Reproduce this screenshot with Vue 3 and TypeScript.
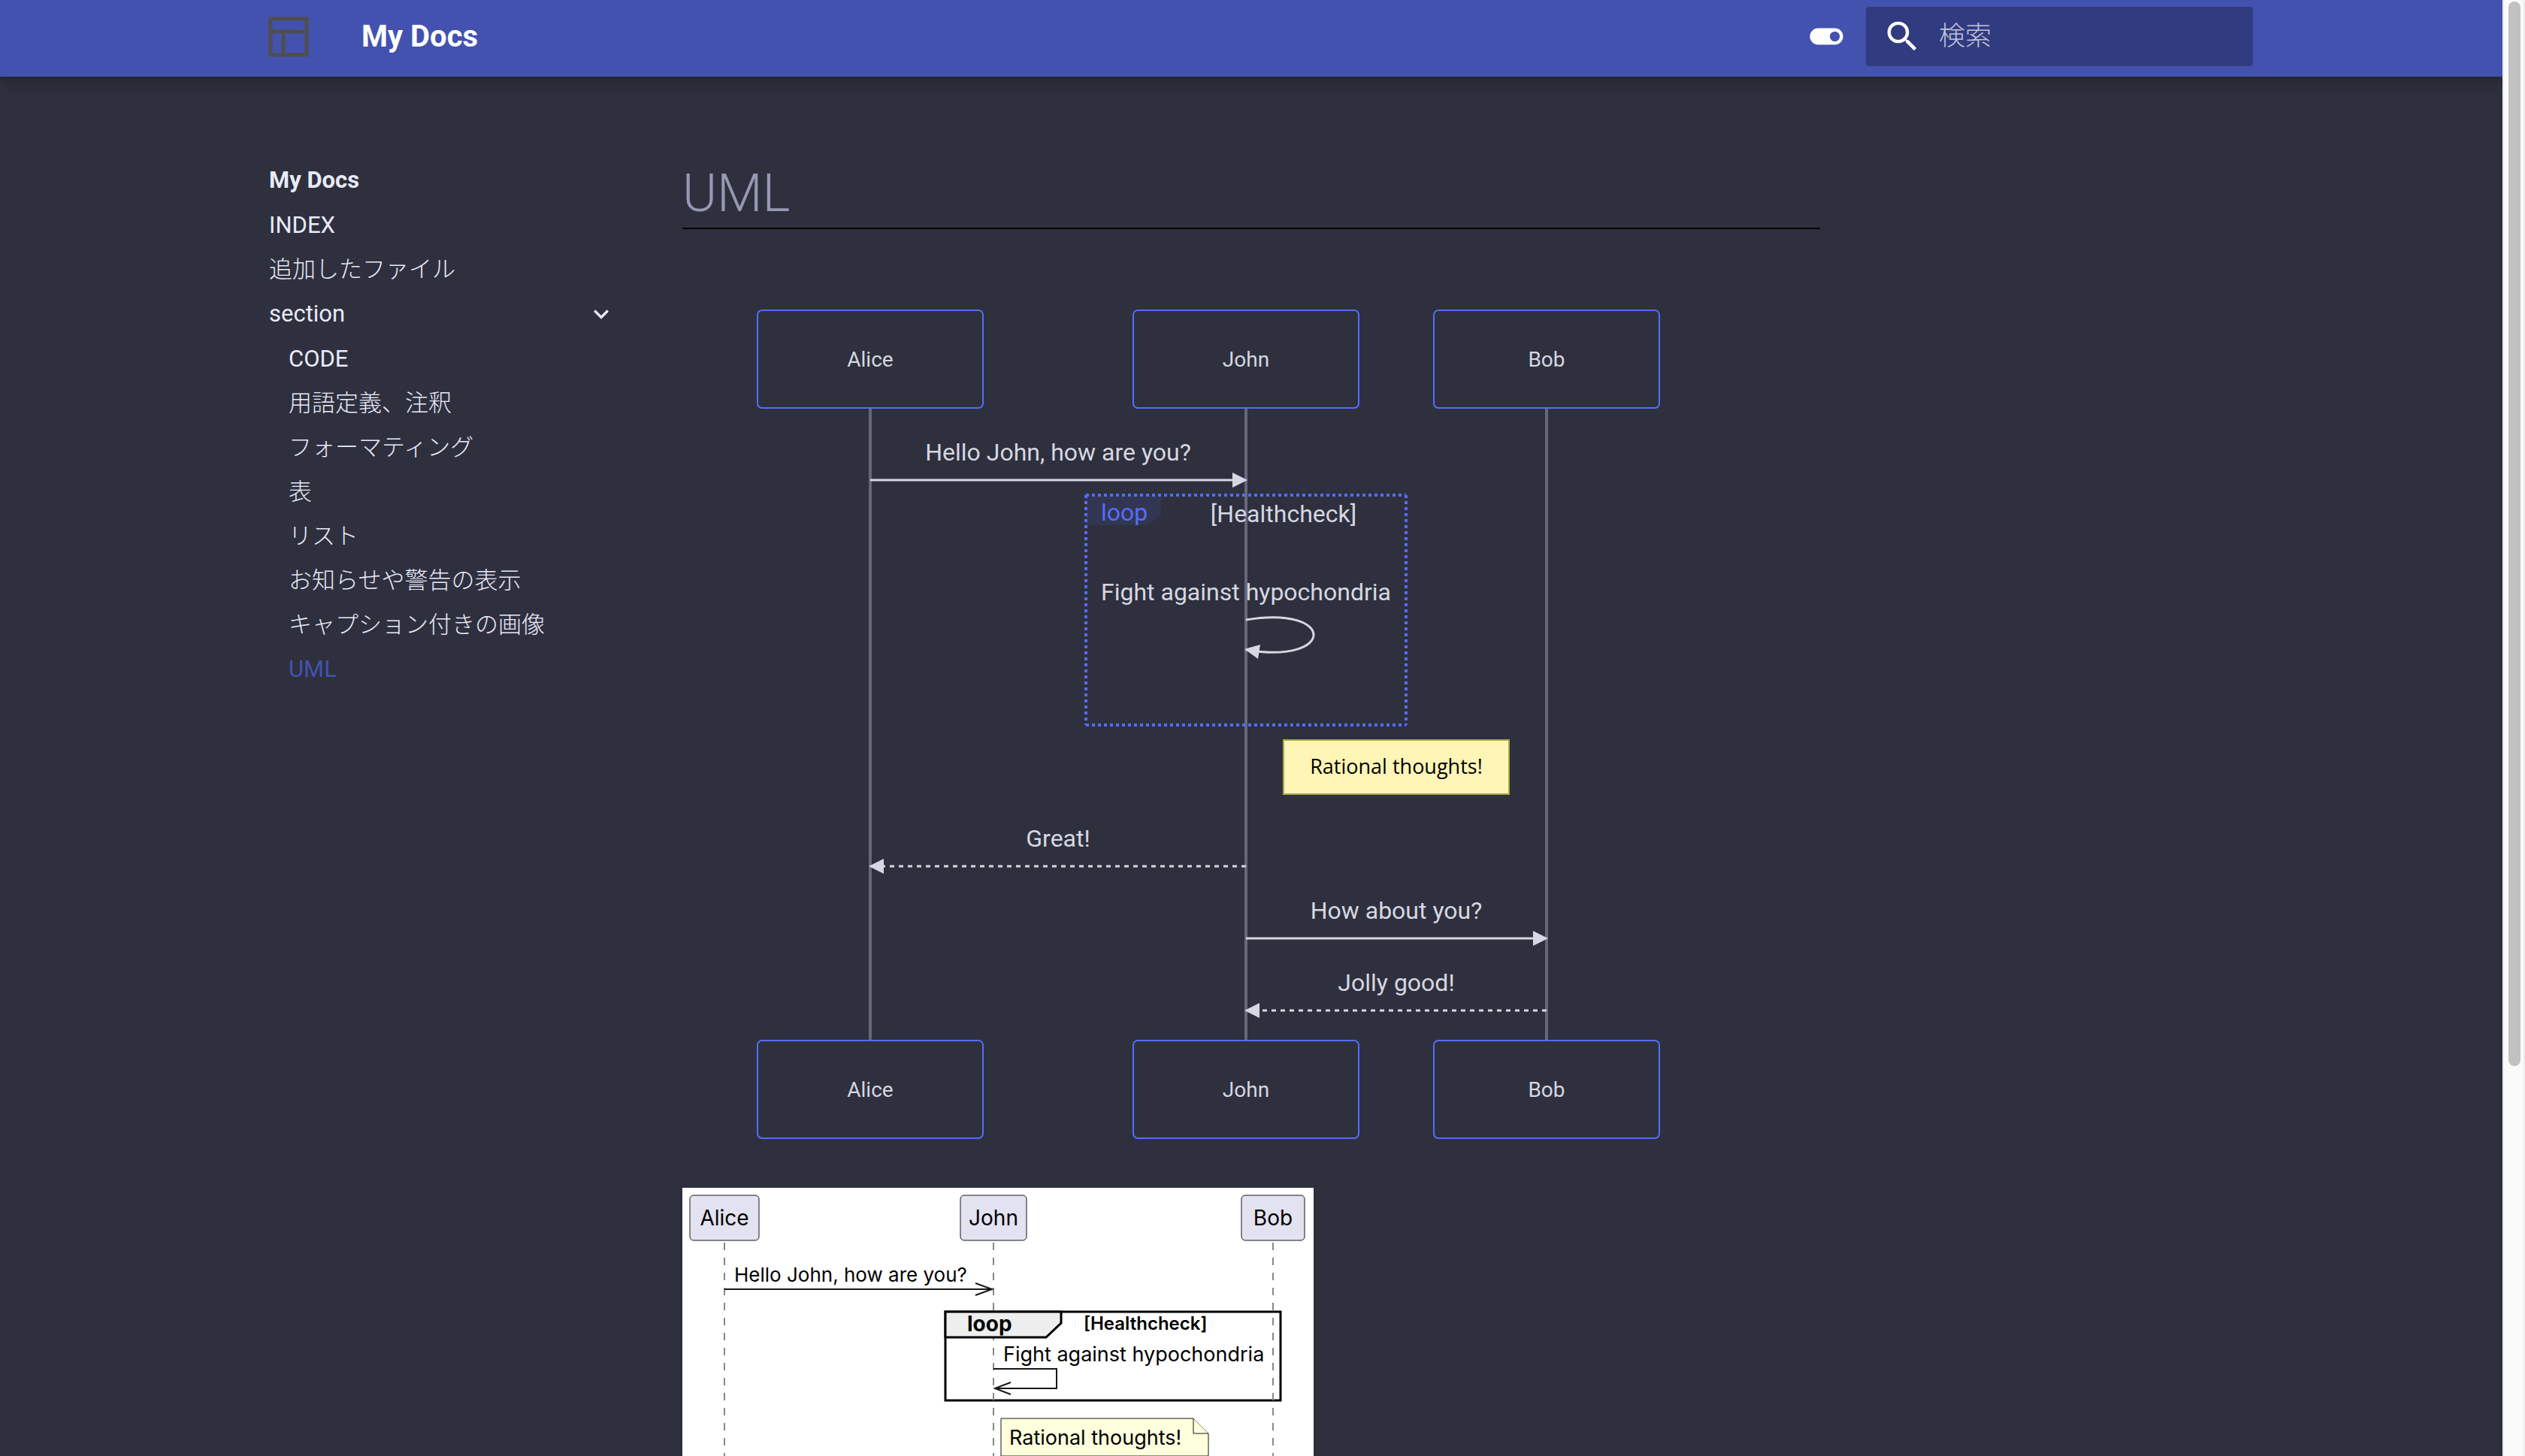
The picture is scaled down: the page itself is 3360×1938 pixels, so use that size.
<script setup lang="ts">
interface NavItem {
  label: string
  japanese?: boolean
  active?: boolean
}

interface Message {
  label: string
  from: number
  to: number
  y: number
  dashed: boolean
}

const topItems: NavItem[] = [{ label: 'INDEX' }, { label: '追加したファイル', japanese: true }]

const sectionItems: NavItem[] = [
  { label: 'CODE' },
  { label: '用語定義、注釈', japanese: true },
  { label: 'フォーマティング', japanese: true },
  { label: '表', japanese: true },
  { label: 'リスト', japanese: true },
  { label: 'お知らせや警告の表示', japanese: true },
  { label: 'キャプション付きの画像', japanese: true },
  { label: 'UML', active: true },
]

const actors = [
  { name: 'Alice', x: 250 },
  { name: 'John', x: 750 },
  { name: 'Bob', x: 1150 },
]
const actorRows = [1, 973]

const messages: Message[] = [
  { label: 'Hello John, how are you?', from: 250, to: 750, y: 227, dashed: false },
  { label: 'Great!', from: 750, to: 250, y: 741, dashed: true },
  { label: 'How about you?', from: 750, to: 1150, y: 837, dashed: false },
  { label: 'Jolly good!', from: 1150, to: 750, y: 933, dashed: true },
]

// The head overshoots the lifeline by two units and is twenty units long.
function arrowHead(m: Message): string {
  const dir = m.to > m.from ? 1 : -1
  const tip = m.to + 2 * dir
  const back = tip - 20 * dir
  return `${back},${m.y - 10} ${tip},${m.y} ${back},${m.y + 10}`
}

function shaftEnd(m: Message): number {
  return m.to > m.from ? m.to - 10 : m.to + 10
}

const umlActors = [
  { name: 'Alice', x: 10, width: 92, line: 56 },
  { name: 'John', x: 370, width: 88, line: 414 },
  { name: 'Bob', x: 744, width: 84, line: 786 },
]
</script>

<template>
  <div class="window">
    <div class="page">
      <header class="header">
        <div class="header-inner">
          <a class="logo" href="#" aria-label="My Docs">
            <svg viewBox="0 0 54 54" width="54" height="54" aria-hidden="true">
              <path d="M3 3h48v48H3zM3 20h48M20 20v31" fill="none" stroke="#4e4e4e" stroke-width="5" />
            </svg>
          </a>
          <span class="site-title">My Docs</span>
          <button class="palette" type="button" aria-label="ダークモード">
            <svg viewBox="0 0 24 24" width="53" height="53" aria-hidden="true">
              <path fill="#fff" d="M17 7H7a5 5 0 0 0-5 5 5 5 0 0 0 5 5h10a5 5 0 0 0 5-5 5 5 0 0 0-5-5m0 8a3 3 0 0 1-3-3 3 3 0 0 1 3-3 3 3 0 0 1 3 3 3 3 0 0 1-3 3" />
            </svg>
          </button>
          <form class="search" role="search" @submit.prevent>
            <label class="search-icon" for="query" aria-label="検索">
              <svg viewBox="0 0 24 24" width="53" height="53" aria-hidden="true">
                <path fill="#fff" d="M9.5 3A6.5 6.5 0 0 1 16 9.5c0 1.61-.59 3.09-1.56 4.23l.27.27h.79l5 5-1.5 1.5-5-5v-.79l-.27-.27A6.516 6.516 0 0 1 9.5 16 6.5 6.5 0 0 1 3 9.5 6.5 6.5 0 0 1 9.5 3m0 2C7 5 5 7 5 9.5S7 14 9.5 14 14 12 14 9.5 12 5 9.5 5" />
              </svg>
            </label>
            <input id="query" class="search-input" type="text" placeholder="検索" />
          </form>
        </div>
      </header>

      <div class="body">
        <nav class="sidebar" aria-label="My Docs">
          <a class="nav-title" href="#">My Docs</a>
          <ul class="nav-list">
            <li v-for="item in topItems" :key="item.label">
              <a class="nav-link" :class="{ japanese: item.japanese }" href="#">{{ item.label }}</a>
            </li>
            <li>
              <button class="nav-section" type="button" aria-expanded="true">
                <span>section</span>
                <svg viewBox="0 0 24 24" width="40" height="40" aria-hidden="true">
                  <path fill="currentColor" d="M7.41 8.58 12 13.17l4.59-4.59L18 10l-6 6-6-6z" />
                </svg>
              </button>
              <ul class="nav-list nested">
                <li v-for="item in sectionItems" :key="item.label">
                  <a
                    class="nav-link"
                    :class="{ active: item.active, japanese: item.japanese }"
                    href="#"
                  >{{ item.label }}</a>
                </li>
              </ul>
            </li>
          </ul>
        </nav>

        <main class="content">
          <h1 class="heading">UML</h1>

          <svg class="mermaid" viewBox="0 0 1400 1104" width="1400" height="1104" role="img" aria-label="Sequence diagram">
            <g v-for="a in actors" :key="a.name">
              <line class="lifeline" :x1="a.x" :x2="a.x" y1="131" y2="973" />
              <template v-for="y in actorRows" :key="y">
                <rect class="actor" :x="a.x - 150" :y="y" width="300" height="130" rx="6" />
                <text class="actor-name" :x="a.x" :y="y + 75">{{ a.name }}</text>
              </template>
            </g>

            <polygon class="loop-tab" points="537,247 637,247 637,273 620,287 537,287" />
            <g class="loop-frame">
              <line x1="537" y1="247" x2="963" y2="247" />
              <line x1="963" y1="247" x2="963" y2="553" />
              <line x1="537" y1="553" x2="963" y2="553" />
              <line x1="537" y1="247" x2="537" y2="553" />
            </g>
            <text class="message loop-name" x="588" y="281">loop</text>
            <text class="message" x="800" y="283">[Healthcheck]</text>
            <text class="message" x="750" y="387">Fight against hypochondria</text>
            <path class="shaft" d="M750 413C870 393 870 473 750 453" />
            <polygon class="head" points="748,452 769,446 766,465" />

            <rect class="note" x="800" y="573" width="300" height="72" />
            <text class="note-text" x="950" y="618">Rational thoughts!</text>

            <g v-for="m in messages" :key="m.label">
              <text class="message" :x="(m.from + m.to) / 2" :y="m.y - 26">{{ m.label }}</text>
              <line class="shaft" :class="{ dashed: m.dashed }" :x1="m.from" :x2="shaftEnd(m)" :y1="m.y" :y2="m.y" />
              <polygon class="head" :points="arrowHead(m)" />
            </g>
          </svg>

          <svg class="plantuml" viewBox="0 0 840 640" width="840" height="640" role="img" aria-label="PlantUML sequence diagram">
            <rect class="frame" x="350" y="165" width="446" height="118" />
            <g v-for="a in umlActors" :key="a.name">
              <line class="uml-lifeline" :x1="a.line" :x2="a.line" y1="73" y2="560" />
              <rect class="uml-actor" :x="a.x" y="10" :width="a.width" height="60" rx="5" />
              <text class="uml-name" :x="a.line" y="50">{{ a.name }}</text>
            </g>

            <text class="uml-text" x="69" y="125">Hello John, how are you?</text>
            <path class="uml-arrow" d="M56 135H411M390 127L412 135L390 143" />

            <path class="frame-tab" d="M350 165H504V180L484 199H350Z" />
            <text class="uml-text tab-name" x="379" y="191">loop</text>
            <text class="uml-text guard" x="534" y="189">[Healthcheck]</text>
            <text class="uml-text inner" x="427" y="231">Fight against hypochondria</text>
            <path class="uml-arrow" d="M414 241H498V267H416M437 259L416 267L437 275" />

            <path class="uml-note" d="M424 307H680L700 327V357H424Z" />
            <path class="uml-note" d="M680 307V327H700" />
            <text class="uml-text inner" x="435" y="342">Rational thoughts!</text>
          </svg>
        </main>
      </div>
    </div>

    <div class="scrollbar" aria-hidden="true">
      <div class="thumb"></div>
    </div>
  </div>
</template>

<style>
body {
  background: #2e303d;
}
</style>

<style scoped>
.window {
  display: flex;
  height: 100vh;
  overflow: hidden;
  background: #2e303d;
  color: #e8eafa;
  font-family: Roboto, "Noto Sans CJK JP", sans-serif;
}

.page {
  flex: 1;
  min-width: 0;
  overflow: hidden;
}

.header {
  position: relative;
  z-index: 1;
  background: #4352af;
  box-shadow: 0 0 9px rgba(0, 0, 0, 0.1), 0 9px 18px rgba(0, 0, 0, 0.2);
}

.header-inner {
  display: flex;
  align-items: center;
  box-sizing: border-box;
  max-width: 2684px;
  height: 102px;
  margin: 0 auto;
  padding: 0 9px 5px 34px;
}

.logo,
.palette,
.search-icon {
  display: flex;
}

.site-title {
  flex: 1;
  margin-left: 70px;
  color: #fff;
  font-size: 40px;
  font-weight: 700;
  line-height: 48px;
}

.palette {
  margin-right: 26px;
  padding: 0;
  border: 0;
  background: none;
}

.search {
  display: flex;
  align-items: center;
  box-sizing: border-box;
  width: 515px;
  height: 79px;
  padding: 0 22px;
  border-radius: 4px;
  background: #313b80;
}

.search-input {
  flex: 1;
  min-width: 0;
  margin-left: 22px;
  padding: 0;
  border: 0;
  outline: 0;
  background: none;
  color: #fff;
  font-family: inherit;
  font-size: 35px;
  font-weight: 300;
}

.search-input::placeholder {
  color: #c1c4d9;
  opacity: 1;
}

.body {
  display: flex;
  max-width: 2684px;
  margin: 0 auto;
}

.sidebar {
  flex: none;
  box-sizing: border-box;
  width: 532px;
  padding: 118px 35px 0;
  font-size: 31px;
  line-height: 40px;
}

.nav-title,
.nav-link {
  display: block;
  color: inherit;
  text-decoration: none;
}

.nav-title {
  margin-bottom: 20px;
  font-weight: 700;
}

.nav-list {
  display: flex;
  flex-direction: column;
  gap: 19px;
  margin: 0;
  padding: 0;
  list-style: none;
}

.nested {
  margin-top: 20px;
  padding-left: 26px;
}

.nav-link.japanese {
  font-weight: 300;
}

.nav-link.active {
  color: #4352af;
}

.nav-section {
  display: flex;
  align-items: center;
  justify-content: space-between;
  width: 100%;
  height: 40px;
  padding: 0;
  border: 0;
  background: none;
  color: inherit;
  font: inherit;
}

.content {
  flex: 1;
  min-width: 0;
  margin-right: 532px;
  padding: 109px 53px 0;
}

.heading {
  margin: 0 0 107px;
  border-bottom: 2px solid #000;
  color: #9798b4;
  font-size: 70px;
  font-weight: 300;
  line-height: 92px;
}

.mermaid {
  display: block;
  margin-bottom: 65px;
}

.lifeline {
  stroke: #66677b;
  stroke-width: 4;
}

.actor {
  fill: #2e303d;
  stroke: #536dfe;
  stroke-width: 2;
}

.actor-name,
.message,
.note-text,
.uml-name {
  text-anchor: middle;
}

.actor-name {
  fill: #d5d7e2;
  font-size: 28px;
}

.message {
  fill: #d5d7e2;
  font-size: 32px;
}

.loop-tab {
  fill: #333650;
}

.loop-frame {
  stroke: #536dfe;
  stroke-width: 4;
  stroke-dasharray: 4 4;
}

.loop-name {
  fill: #536dfe;
}

.shaft {
  fill: none;
  stroke: #d5d7e2;
  stroke-width: 3;
}

.dashed {
  stroke-dasharray: 6 6;
}

.head {
  fill: #d5d7e2;
}

.note {
  fill: #fff5b6;
  stroke: #aaaa44;
  stroke-width: 2;
}

.note-text {
  fill: #000;
  font-family: "Open Sans", sans-serif;
  font-size: 27px;
}

.plantuml {
  display: block;
  background: #fff;
  font-family: Inter, sans-serif;
}

.uml-lifeline {
  stroke: #888;
  stroke-width: 2;
  stroke-dasharray: 10 10;
}

.uml-actor {
  fill: #e2e2f0;
  stroke: #181818;
  stroke-width: 1;
}

.uml-name {
  font-size: 28px;
}

.uml-text {
  font-size: 26px;
}

.inner {
  font-size: 27px;
}

.tab-name {
  font-size: 28px;
  font-weight: 700;
}

.guard {
  font-size: 24px;
  font-weight: 600;
}

.uml-arrow {
  fill: none;
  stroke: #181818;
  stroke-width: 2;
}

.frame,
.frame-tab {
  fill: none;
  stroke: #000;
  stroke-width: 3;
}

.frame-tab {
  fill: #eee;
}

.uml-note {
  fill: #feffdd;
  stroke: #181818;
  stroke-width: 1;
}

.scrollbar {
  flex: none;
  box-sizing: border-box;
  width: 30px;
  padding: 2px 4px 0 6px;
  border: solid #ececec;
  border-width: 0 2px;
  background: #fafafa;
}

.thumb {
  width: 16px;
  height: 73.2%;
  border-radius: 8px;
  background: #c1c1c1;
}
</style>
